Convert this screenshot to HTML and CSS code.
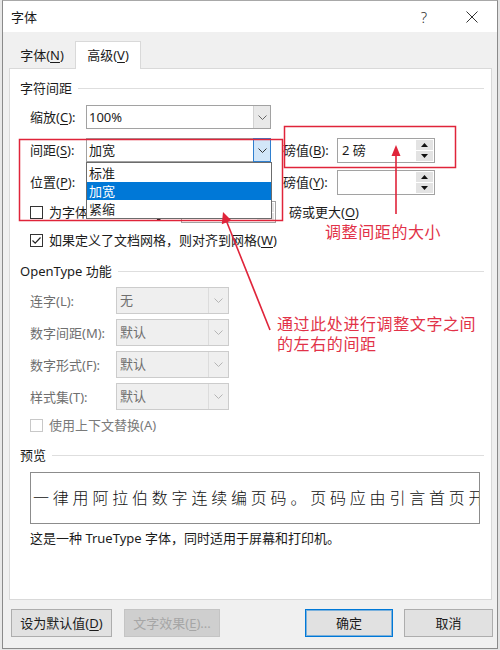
FILE: index.html
```html
<!DOCTYPE html>
<html lang="zh-CN">
<head>
<meta charset="utf-8">
<title>字体</title>
<link rel="stylesheet" href="styles.css">
</head>
<body>
<div class="screen">
  <div class="edge"></div>
  <div class="dialog">
    <div class="titlebar">
      <span class="title">字体</span>
      <span class="spacer"></span>
      <span class="cap-btn help">?</span>
      <span class="cap-btn close"><svg width="12" height="12" viewBox="0 0 12 12"><path d="M0.5 0.5 L11.5 11.5 M11.5 0.5 L0.5 11.5" stroke="#333" stroke-width="1" fill="none"/></svg></span>
    </div>
    <div class="tabs">
      <div class="tab">字体(<u>N</u>)</div>
      <div class="tab active">高级(<u>V</u>)</div>
    </div>
    <div class="panel">
      <div class="group-title"><span>字符间距</span><i></i></div>

      <div class="row r1">
        <span class="lbl">缩放(<u>C</u>):</span>
        <div class="combo">
          <span class="val">100%</span>
          <span class="drop"><svg width="9" height="5" viewBox="0 0 9 5"><polyline points="0.5,0.5 4.5,4.5 8.5,0.5" fill="none" stroke="#666" stroke-width="1"/></svg></span>
        </div>
      </div>

      <div class="row r2">
        <span class="lbl">间距(<u>S</u>):</span>
        <div class="combo open">
          <span class="val">加宽</span>
          <span class="drop"><svg width="9" height="5" viewBox="0 0 9 5"><polyline points="0.5,0.5 4.5,4.5 8.5,0.5" fill="none" stroke="#333" stroke-width="1"/></svg></span>
          <ul class="list">
            <li>标准</li>
            <li class="sel">加宽</li>
            <li>紧缩</li>
          </ul>
        </div>
        <span class="lbl-r">磅值(<u>B</u>):</span>
        <div class="spin">
          <span class="val">2 磅</span>
          <span class="spin-btns">
            <span class="sb"><svg width="7" height="4" viewBox="0 0 7 4"><polygon points="0,4 3.5,0 7,4" fill="#111"/></svg></span>
            <span class="sb"><svg width="7" height="4" viewBox="0 0 7 4"><polygon points="0,0 3.5,4 7,0" fill="#111"/></svg></span>
          </span>
        </div>
      </div>

      <div class="row r3">
        <span class="lbl">位置(<u>P</u>):</span>
        <div class="combo">
          <span class="val">标准</span>
          <span class="drop"><svg width="9" height="5" viewBox="0 0 9 5"><polyline points="0.5,0.5 4.5,4.5 8.5,0.5" fill="none" stroke="#666" stroke-width="1"/></svg></span>
        </div>
        <span class="lbl-r">磅值(<u>Y</u>):</span>
        <div class="spin">
          <span class="val"></span>
          <span class="spin-btns">
            <span class="sb"><svg width="7" height="4" viewBox="0 0 7 4"><polygon points="0,4 3.5,0 7,4" fill="#111"/></svg></span>
            <span class="sb"><svg width="7" height="4" viewBox="0 0 7 4"><polygon points="0,0 3.5,4 7,0" fill="#111"/></svg></span>
          </span>
        </div>
      </div>

      <div class="row r4">
        <span class="check-wrap">
          <span class="box"></span>
          <span class="ctext">为字体调整字间距(<u>J</u>):</span>
        </span>
        <div class="spin small">
          <span class="val"></span>
          <span class="spin-btns">
            <span class="sb"><svg width="7" height="4" viewBox="0 0 7 4"><polygon points="0,4 3.5,0 7,4" fill="#111"/></svg></span>
            <span class="sb"><svg width="7" height="4" viewBox="0 0 7 4"><polygon points="0,0 3.5,4 7,0" fill="#111"/></svg></span>
          </span>
        </div>
        <span class="after">磅或更大(<u>O</u>)</span>
      </div>

      <div class="row r5">
        <span class="box checked"><svg width="11" height="11" viewBox="0 0 11 11"><path d="M1.5 5.5 L4.2 8.2 L9.5 2.5" fill="none" stroke="#222" stroke-width="1.2"/></svg></span>
        <span class="ctext">如果定义了文档网格，则对齐到网格(<u>W</u>)</span>
      </div>

      <div class="group-title ot-title"><span>OpenType 功能</span><i></i></div>

      <div class="ot-row first">
        <span class="ot-lbl">连字(L):</span>
        <div class="combo disabled"><span class="val">无</span><span class="drop"><svg width="9" height="5" viewBox="0 0 9 5"><polyline points="0.5,0.5 4.5,4.5 8.5,0.5" fill="none" stroke="#b5b5b5" stroke-width="1"/></svg></span></div>
      </div>
      <div class="ot-row">
        <span class="ot-lbl">数字间距(M):</span>
        <div class="combo disabled"><span class="val">默认</span><span class="drop"><svg width="9" height="5" viewBox="0 0 9 5"><polyline points="0.5,0.5 4.5,4.5 8.5,0.5" fill="none" stroke="#b5b5b5" stroke-width="1"/></svg></span></div>
      </div>
      <div class="ot-row">
        <span class="ot-lbl">数字形式(F):</span>
        <div class="combo disabled"><span class="val">默认</span><span class="drop"><svg width="9" height="5" viewBox="0 0 9 5"><polyline points="0.5,0.5 4.5,4.5 8.5,0.5" fill="none" stroke="#b5b5b5" stroke-width="1"/></svg></span></div>
      </div>
      <div class="ot-row">
        <span class="ot-lbl">样式集(T):</span>
        <div class="combo disabled"><span class="val">默认</span><span class="drop"><svg width="9" height="5" viewBox="0 0 9 5"><polyline points="0.5,0.5 4.5,4.5 8.5,0.5" fill="none" stroke="#b5b5b5" stroke-width="1"/></svg></span></div>
      </div>

      <div class="row ctx">
        <span class="box disabled"></span>
        <span class="ctext grey">使用上下文替换(A)</span>
      </div>

      <div class="group-title pv-title"><span>预览</span><i></i></div>
      <div class="preview"><span>一律用阿拉伯数字连续编页码。页码应由引言首页开始</span></div>
      <div class="caption">这是一种 TrueType 字体，同时适用于屏幕和打印机。</div>
    </div>
    <div class="footer">
      <button class="btn b-default">设为默认值(<u>D</u>)</button>
      <button class="btn b-effect" disabled>文字效果(<u>E</u>)...</button>
      <span class="spacer"></span>
      <button class="btn b-ok">确定</button>
      <button class="btn b-cancel">取消</button>
    </div>
  </div>

  <svg class="marks" width="500" height="650" viewBox="0 0 500 650">
    <rect x="19.5" y="139.5" width="263" height="81" fill="none" stroke="#e0243a" stroke-width="1.5"/>
    <rect x="284.5" y="126.5" width="171" height="41" fill="none" stroke="#e0243a" stroke-width="1.5"/>
    <line x1="396" y1="154" x2="396" y2="214" stroke="#e0243a" stroke-width="1.6"/>
    <polygon points="396,145 391.5,156 400.5,156" fill="#e0243a"/>
    <line x1="270" y1="330" x2="226" y2="220" stroke="#e0243a" stroke-width="1.6"/>
    <polygon points="223,212 231.5,220.5 221.8,224.3" fill="#e0243a"/>
  </svg>
  <div class="note note1">调整间距的大小</div>
  <div class="note note2">通过此处进行调整文字之间<br>的左右的间距</div>
</div>
</body>
</html>
```

FILE: styles.css
```css
* { box-sizing: border-box; }

body {
  margin: 0;
  width: 500px;
  height: 650px;
  overflow: hidden;
  background: #e4e4e4;
  font-family: "Noto Sans", "Noto Sans CJK SC", sans-serif;
  font-size: 13px;
  color: #1b1b1b;
}

u { text-decoration: underline; text-underline-offset: 2px; text-decoration-thickness: 1px; }

.screen {
  position: relative;
  display: flex;
  width: 500px;
  height: 650px;
}

.edge {
  width: 2px;
  background: #e8e8e8;
}

.dialog {
  width: 496px;
  height: 649px;
  display: flex;
  flex-direction: column;
  background: #f0f0f0;
  border: 1px solid #8a8a8a;
  border-top-color: #a8a8a8;
}

/* title bar */
.titlebar {
  height: 31px;
  display: flex;
  align-items: center;
  background: #ffffff;
  padding-left: 8px;
}
.title { font-size: 13px; line-height: 16px; margin-top: 1px; }
.spacer { flex: 1; }
.cap-btn {
  width: 46px;
  height: 31px;
  display: flex;
  align-items: center;
  justify-content: center;
  color: #333;
}
.cap-btn.help { font-size: 15px; font-family: "Noto Sans", sans-serif; font-weight: 300; }
.cap-btn.close { width: 50px; }

/* tabs */
.tabs {
  height: 36px;
  display: flex;
  align-items: flex-end;
  padding-left: 6px;
}
.tab {
  width: 66px;
  height: 26px;
  display: flex;
  align-items: center;
  justify-content: center;
  line-height: 16px;
  padding-bottom: 1px;
}
.tab.active {
  height: 28px;
  background: #ffffff;
  border: 1px solid #d9d9d9;
  border-bottom: none;
  margin-bottom: -1px;
  position: relative;
  z-index: 1;
}

/* panel */
.panel {
  margin: 0 5px 0 6px;
  height: 532px;
  background: #ffffff;
  border: 1px solid #d9d9d9;
  padding: 0 7px 0 10px;
}

.group-title {
  display: flex;
  align-items: center;
  height: 16px;
  line-height: 16px;
  margin-top: 11px;
  color: #1b1b1b;
}
.group-title i {
  flex: 1;
  height: 1px;
  background: #dedede;
  margin-left: 6px;
}

.row {
  display: flex;
  align-items: center;
  height: 24px;
  padding-left: 10px;
  line-height: 16px;
}
.r1 { margin-top: 9px; }
.r2 { margin-top: 9px; position: relative; z-index: 3; }
.r3 { margin-top: 8px; }
.r4 { margin-top: 7px; height: 22px; }
.r5 { margin-top: 8px; height: 18px; }

.lbl { width: 56px; }
.lbl-r { width: 54px; margin-left: 12px; }

.combo {
  position: relative;
  width: 185px;
  height: 24px;
  display: flex;
  border: 1px solid #a2a2a2;
  background: #ffffff;
}
.combo .val {
  flex: 1;
  padding-left: 2px;
  line-height: 22px;
}
.combo .drop {
  width: 17px;
  display: flex;
  align-items: center;
  justify-content: center;
  background: #e9e9e9;
  border-left: 1px solid #d2d2d2;
}
.combo.open .drop {
  background: #d2e6f8;
  border: 1px solid #2f7fcf;
  margin: -1px -1px -1px 0;
  width: 18px;
}

.list {
  list-style: none;
  margin: 0;
  padding: 0;
  position: absolute;
  left: -1px;
  top: 23px;
  width: 186px;
  height: 57px;
  background: #ffffff;
  border: 1px solid #6c6c6c;
  padding-top: 1px;
}
.list li {
  height: 18px;
  line-height: 18px;
  padding-left: 2px;
}
.list li.sel {
  background: #0078d7;
  color: #ffffff;
}

.spin {
  width: 98px;
  height: 25px;
  display: flex;
  border: 1px solid #a2a2a2;
  background: #ffffff;
}
.spin .val {
  flex: 1;
  padding-left: 4px;
  line-height: 23px;
}
.spin-btns {
  width: 18px;
  display: flex;
  flex-direction: column;
  gap: 1px;
  padding: 1px 1px 1px 0;
}
.sb {
  flex: 1;
  background: #e3e3e3;
  display: flex;
  align-items: center;
  justify-content: center;
}
.spin.small {
  width: 95px;
  height: 22px;
}

.check-wrap {
  width: 151px;
  display: flex;
  align-items: center;
}
.box {
  width: 13px;
  height: 13px;
  border: 1px solid #333;
  background: #fff;
  flex: none;
  display: flex;
  align-items: center;
  justify-content: center;
}
.box.disabled { border-color: #c8c8c8; }
.ctext { margin-left: 6px; white-space: nowrap; }
.ctext.grey { color: #7a7a7a; }
.after { margin-left: 13px; }

.ot-title { margin-top: 14px; }
.ot-row {
  display: flex;
  align-items: center;
  height: 27px;
  margin-top: 5px;
  padding-left: 10px;
  line-height: 16px;
}
.ot-row.first { margin-top: 8px; }
.ot-lbl { width: 86px; color: #6f6f6f; }
.combo.disabled {
  width: 113px;
  height: 27px;
  background: #efefef;
  border-color: #cccccc;
}
.combo.disabled .val { color: #6f6f6f; line-height: 25px; padding-left: 3px; }
.combo.disabled .drop { background: #efefef; border-left: 1px solid #dcdcdc; width: 20px; }

.ctx { margin-top: 7px; height: 16px; }

.pv-title { margin-top: 14px; }
.preview {
  margin: 9px 0 0 10px;
  width: 450px;
  height: 52px;
  border: 1px solid #8c8c8c;
  overflow: hidden;
  white-space: nowrap;
  padding-left: 2px;
  line-height: 50px;
  font-size: 16px;
  letter-spacing: 3.8px;
  font-weight: 300;
  color: #111;
}
.caption {
  margin: 5px 0 0 10px;
  height: 18px;
  line-height: 18px;
}

/* footer */
.footer {
  flex: 1;
  display: flex;
  align-items: flex-start;
  padding: 9px 4px 0 8px;
}
.btn {
  height: 28px;
  border: 1px solid #adadad;
  background: #e1e1e1;
  font-family: inherit;
  font-size: 13px;
  color: #1b1b1b;
  padding: 0;
  display: flex;
  align-items: center;
  justify-content: center;
  line-height: 16px;
}
.b-default { width: 101px; }
.b-effect {
  width: 96px;
  margin-left: 12px;
  background: #cfcfcf;
  border-color: #c4c4c4;
  color: #a6a6a6;
}
.b-ok {
  width: 88px;
  border-color: #0078d7;
  box-shadow: inset 0 0 0 1px rgba(0, 120, 215, 0.45);
}
.b-cancel { width: 89px; margin-left: 11px; }

/* annotations */
.marks {
  position: absolute;
  left: 0;
  top: 0;
  pointer-events: none;
  z-index: 10;
}
.note {
  position: absolute;
  z-index: 11;
  color: #e23248;
  font-size: 16px;
  line-height: 20px;
  letter-spacing: 0.6px;
  font-family: "Noto Sans CJK SC", sans-serif;
}
.note1 { left: 325px; top: 221px; }
.note2 { left: 277px; top: 313px; }
```
